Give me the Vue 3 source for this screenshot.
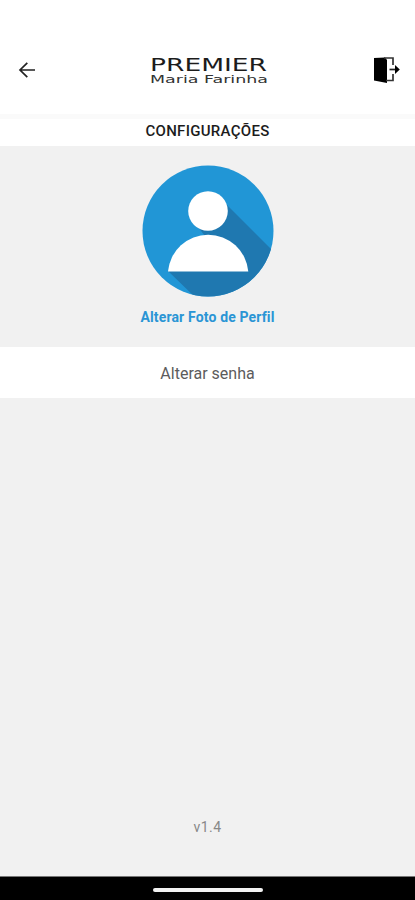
<script setup>
const title = 'CONFIGURAÇÕES'
const version = 'v1.4'
</script>

<template>
  <main class="screen">
    <header class="header">
      <button class="icon-button back" aria-label="Voltar">
        <svg width="18" height="18" viewBox="0 0 18 18" fill="none" stroke="#222" stroke-width="1.7">
          <path d="M17 9H2.500M9.300 1.800L2 9l7.300 7.200" />
        </svg>
      </button>
      <svg class="logo" width="120" height="32" viewBox="0 0 120 32">
        <text class="logo-name" x="0" y="17" textLength="117" lengthAdjust="spacingAndGlyphs">PREMIER</text>
        <text class="logo-sub" x="0" y="29" textLength="118" lengthAdjust="spacingAndGlyphs">Maria Farinha</text>
      </svg>
      <button class="icon-button" aria-label="Sair">
        <svg width="28" height="28" viewBox="0 0 28 28">
          <path d="M1 2L12 1.500L14 4V27L1 24.500Z" fill="#000" />
          <path d="M11 2H20V9M13 24.500H20V18" fill="none" stroke="#333" stroke-width="1.700" />
          <path d="M16.500 13.500H23" stroke="#222" stroke-width="1.700" />
          <path d="M22 9L26.800 13.500L22 18Z" fill="#000" />
        </svg>
      </button>
    </header>
    <h1 class="title">{{ title }}</h1>
    <section class="profile">
      <svg class="avatar" width="132" height="132" viewBox="0 0 132 132">
        <defs>
          <clipPath id="disc"><circle cx="66" cy="66" r="65.500" /></clipPath>
        </defs>
        <circle cx="66" cy="66" r="65.500" fill="#2196d6" />
        <path clip-path="url(#disc)" d="M80 35L134 89V136H57L26 106L66 75L56 62L66 62Z" fill="#1f78b0" />
        <circle cx="66" cy="46" r="19.800" fill="#fff" />
        <path d="M26 106.500A40.300 40.300 0 0 1 106.300 106.500Z" fill="#fff" />
      </svg>
      <a class="photo-link">Alterar Foto de Perfil</a>
    </section>
    <button class="password">Alterar senha</button>
    <footer class="version">{{ version }}</footer>
    <div class="navbar"><span class="handle"></span></div>
  </main>
</template>

<style>
body { margin: 0; }
</style>

<style scoped>
.screen {
  display: flex;
  flex-direction: column;
  height: 900px;
  background: #f1f1f1;
  font-family: Roboto, sans-serif;
}
button {
  border: 0;
  padding: 0;
  background: none;
  font-family: inherit;
}
.header {
  box-sizing: border-box;
  height: 114px;
  padding: 26px 14px 0 18px;
  display: grid;
  grid-template-columns: 28px 1fr 28px;
  align-items: center;
  justify-items: center;
  background: #fff;
}
.icon-button {
  display: flex;
}
.back {
  justify-self: start;
}
.logo {
  display: block;
  overflow: visible;
}
.logo-name {
  font-family: "DejaVu Sans", sans-serif;
  font-size: 18.5px;
  fill: #1c1c1c;
}
.logo-sub {
  font-family: "DejaVu Sans", sans-serif;
  font-size: 10.5px;
  fill: #333;
}
.title {
  box-sizing: border-box;
  height: 32px;
  margin: 0;
  border-top: 5px solid #fafafa;
  background: #fff;
  color: #1c1c1c;
  font-size: 15px;
  font-weight: 500;
  line-height: 25px;
  letter-spacing: 0.3px;
  text-align: center;
}
.profile {
  box-sizing: border-box;
  height: 201px;
  padding-top: 19px;
  display: flex;
  flex-direction: column;
  align-items: center;
  gap: 11px;
}
.avatar {
  display: block;
}
.photo-link {
  color: #2a95d5;
  font-size: 14px;
  font-weight: 700;
  line-height: 19px;
  letter-spacing: 0.15px;
}
.password {
  height: 51px;
  padding-top: 1px;
  background: #fff;
  color: #5c5c5c;
  font-size: 16px;
}
.version {
  margin-top: auto;
  padding-bottom: 39px;
  color: #888;
  font-size: 14px;
  line-height: 20px;
  text-align: center;
  letter-spacing: 0.4px;
}
.navbar {
  box-sizing: border-box;
  height: 24px;
  padding-top: 3px;
  border-top: 1px solid #777;
  background: #000;
  display: flex;
  align-items: center;
  justify-content: center;
}
.handle {
  width: 110px;
  height: 4px;
  border-radius: 2px;
  background: #f2f2f2;
}
</style>
